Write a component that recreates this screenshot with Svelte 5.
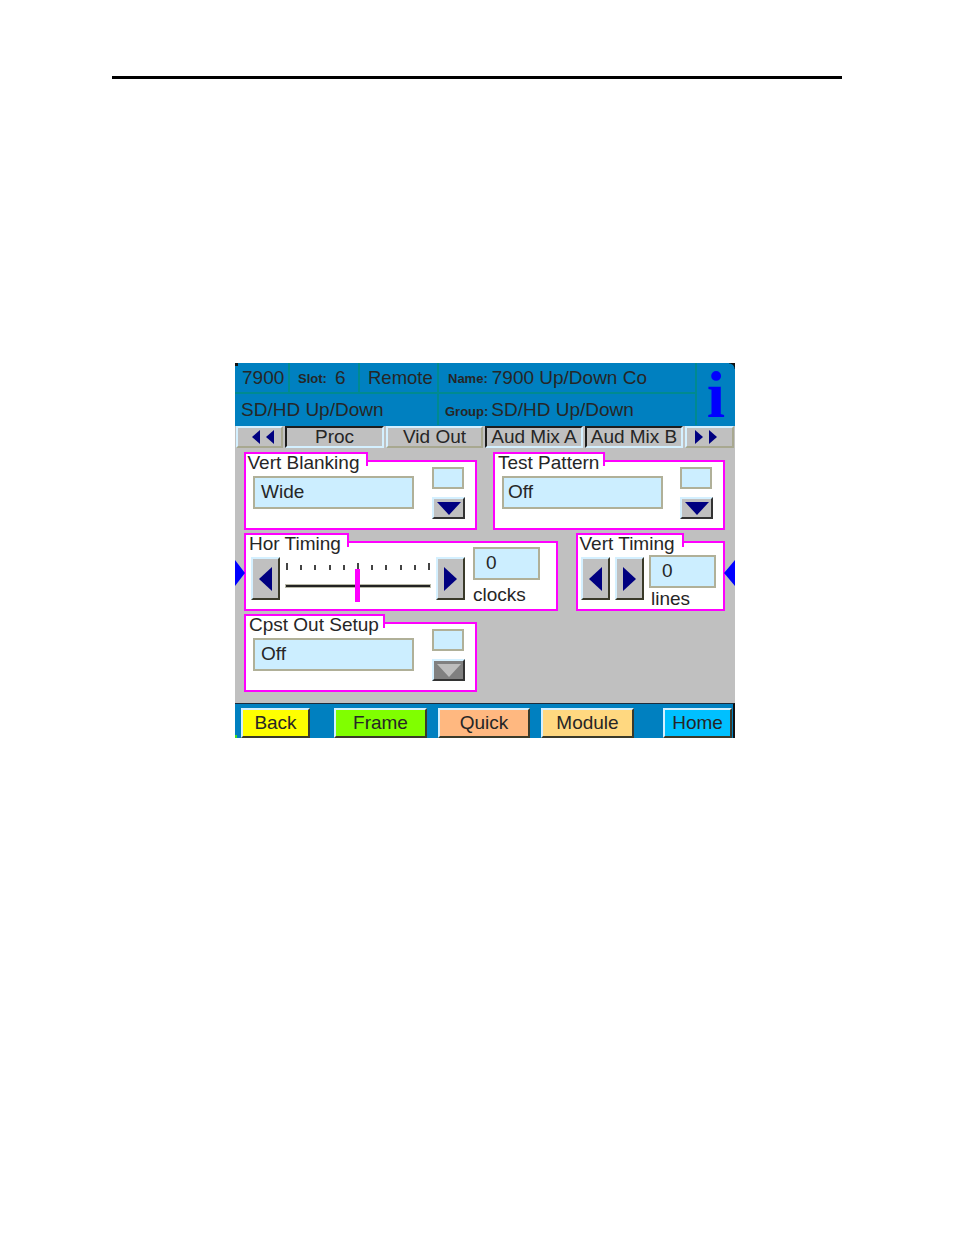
<script lang="ts">
  const tabs = [
    { label: 'Proc', sel: true, w: 99 },
    { label: 'Vid Out', sel: false, w: 97 },
    { label: 'Aud Mix A', sel: true, w: 98 },
    { label: 'Aud Mix B', sel: true, w: 98 },
  ];
  const navButtons = [
    { label: 'Back', color: '#ffff00', w: 69, gap: 24 },
    { label: 'Frame', color: '#80ff00', w: 93, gap: 11 },
    { label: 'Quick', color: '#ffb880', w: 92, gap: 11 },
    { label: 'Module', color: '#ffd880', w: 93, gap: 29 },
    { label: 'Home', color: '#00c0ff', w: 69, gap: 0 },
  ];
  const ticks = Array.from({ length: 11 }, (_, i) => i);
</script>

{#snippet arrowLeft()}
  <svg width="13" height="24" viewBox="0 0 13 24"><polygon points="13,0 13,24 0,12" fill="#000080"/></svg>
{/snippet}
{#snippet arrowRight()}
  <svg width="13" height="24" viewBox="0 0 13 24"><polygon points="0,0 0,24 13,12" fill="#000080"/></svg>
{/snippet}
{#snippet dropdown(off = false)}
  <div class="drop" class:drop--off={off}>
    <svg width="24" height="13" viewBox="0 0 24 13"><polygon points="0,0 24,0 12,13" fill={off ? '#bdbdbd' : '#000080'}/></svg>
  </div>
{/snippet}
{#snippet doubleArrow(right = false)}
  <svg width="24" height="14" viewBox="0 0 24 14" fill="#000080">
    {#if right}
      <polygon points="1,0 1,14 9,7"/><polygon points="15,0 15,14 23,7"/>
    {:else}
      <polygon points="9,0 9,14 1,7"/><polygon points="23,0 23,14 15,7"/>
    {/if}
  </svg>
{/snippet}

<div class="page">
  <div class="rule"></div>

  <div class="screen">
    <div class="head">
      <div class="cell">7900</div>
      <div class="cell cell--slot"><span class="tiny slot">Slot:</span><span>6</span></div>
      <div class="cell cell--remote">Remote</div>
      <div class="cell cell--name"><span class="tiny name">Name:</span><span>7900 Up/Down Co</span></div>
      <div class="cell cell--info">i</div>
      <div class="cell cell--wide">SD/HD Up/Down</div>
      <div class="cell cell--group"><span class="tiny group">Group:</span><span>SD/HD Up/Down</span></div>
    </div>

    <div class="tabs">
      <div class="tab tab--arrow">{@render doubleArrow()}</div>
      {#each tabs as t}
        <div class="tab" class:tab--sel={t.sel} style="width:{t.w}px">{t.label}</div>
      {/each}
      <div class="tab tab--end">{@render doubleArrow(true)}</div>
    </div>

    <div class="body">
      <div class="row row--top">
        <section class="panel panel--select">
          <div class="legend legend--v">Vert Blanking</div>
          <div class="field field--long">Wide</div>
          <div class="side">
            <div class="mini"></div>
            {@render dropdown()}
          </div>
        </section>
        <section class="panel panel--select panel--narrow">
          <div class="legend legend--short">Test Pattern</div>
          <div class="field field--long">Off</div>
          <div class="side">
            <div class="mini"></div>
            {@render dropdown()}
          </div>
        </section>
      </div>

      <div class="row row--mid">
        <section class="panel panel--hor">
          <div class="legend">Hor Timing</div>
          <div class="step">{@render arrowLeft()}</div>
          <div class="slider">
            <div class="ticks">
              {#each ticks as i}
                <span class="tick" class:tick--tall={i === 0 || i === 5 || i === 10}></span>
              {/each}
            </div>
            <div class="track"></div>
            <div class="thumb"></div>
          </div>
          <div class="step">{@render arrowRight()}</div>
          <div class="readout">
            <div class="field field--num">0</div>
            <div class="unit">clocks</div>
          </div>
        </section>
        <section class="panel panel--vert">
          <div class="legend legend--v">Vert Timing</div>
          <div class="step">{@render arrowLeft()}</div>
          <div class="step">{@render arrowRight()}</div>
          <div class="readout readout--low">
            <div class="field field--num">0</div>
            <div class="unit">lines</div>
          </div>
        </section>
      </div>

      <div class="row">
        <section class="panel panel--select">
          <div class="legend legend--short">Cpst Out Setup</div>
          <div class="field field--long">Off</div>
          <div class="side">
            <div class="mini"></div>
            {@render dropdown(true)}
          </div>
        </section>
      </div>

      <div class="edge edge--l"></div>
      <div class="edge edge--r"></div>
    </div>

    <div class="nav">
      {#each navButtons as b}
        <div class="navbtn" style="width:{b.w}px;margin-right:{b.gap}px;background:{b.color}">{b.label}</div>
      {/each}
    </div>
  </div>
</div>

<style>
  :global(body) {
    margin: 0;
    background: #fff;
    font-family: "Liberation Sans", Arial, sans-serif;
  }

  .page {
    width: 954px; height: 1235px;
    padding-top: 76px;
    box-sizing: border-box;
    overflow: hidden;
    color: #262626;
    font-size: 19px;
  }
  .rule { height: 3px; margin: 0 112px; background: #000; }

  .screen {
    position: relative;
    display: flex; flex-direction: column;
    width: 500px; height: 375px;
    margin: 284px 0 0 235px;
    background: #0080c0;
  }
  /* stray corner pixels of the panel */
  .screen::before {
    content: ""; position: absolute; left: 0; top: 0;
    width: 3px; height: 3px;
    background: #111;
  }
  .screen::after {
    content: ""; position: absolute; right: 0; top: 0;
    width: 6px; height: 6px;
    background: radial-gradient(circle at 0 100%, transparent 5px, #111 6px);
  }

  /* Header */
  .head {
    display: grid;
    grid-template-columns: 55px 70px 79px 258px 38px;
    grid-template-rows: 31px 31px;
    flex-shrink: 0;
  }
  .cell {
    display: flex; align-items: center;
    padding: 0 0 0 7px;
    box-sizing: border-box;
    border-right: 2px solid #008a90;
    border-bottom: 2px solid #008a90;
    white-space: nowrap;
  }
  .cell--slot   { padding-left: 8px; }
  .cell--remote { padding-left: 8px; font-size: 18.5px; }
  .cell--name   { padding-left: 9px; }
  .cell--info {
    grid-column: 5; grid-row: 1 / span 2;
    justify-content: center;
    padding: 2px 0 0;
    border: none;
    color: #0000ff;
    font-family: "Liberation Serif", serif;
    font-size: 66px; font-weight: 700; line-height: 1;
  }
  .cell--wide {
    grid-column: 1 / span 3;
    padding-left: 6px;
    border-bottom: none;
  }
  .cell--group { padding-left: 6px; border-bottom: none; }
  .tiny { font-size: 13px; font-weight: 700; }
  .slot  { margin: 2px 8px 0 0; }
  .name  { margin: 2px 4px 0 0; }
  .group { margin: 4px 3px 0 0; }

  /* Tabs */
  .tabs {
    display: flex; gap: 2px;
    height: 23px; padding-left: 1px;
    background: #c0c0c0 linear-gradient(#0080c0 0 1px, transparent 1px);
    flex-shrink: 0;
  }
  .tab {
    display: flex; align-items: center; justify-content: center;
    box-sizing: border-box;
    height: 22px; margin-top: 1px;
    border: 2px solid;
    border-color: #d4f0ff #a8a890 #a8a890 #d4f0ff;
    background: #c0c0c0;
    white-space: nowrap;
  }
  .tab--sel { border-color: #1c1c1c #d4f0ff #d4f0ff #1c1c1c; }
  .tab--arrow { width: 47px; padding-left: 6px; }
  .tab--end { width: 49px; padding-right: 8px; }

  /* Main area */
  .body {
    position: relative;
    display: flex; flex-direction: column; gap: 11px;
    height: 255px;
    box-sizing: border-box;
    padding: 12px 0 0 9px;
    background: #c0c0c0;
    flex-shrink: 0;
  }
  .row { display: flex; }
  .row--top { gap: 16px; }
  .row--mid { gap: 18px; }

  .panel {
    position: relative;
    display: flex; align-items: flex-start;
    box-sizing: border-box;
    height: 70px;
    border: 2px solid #ff00ff;
    background: #fff;
  }
  .panel--select { width: 233px; padding-left: 7px; }
  .panel--narrow { width: 232px; }
  .panel--narrow .field { padding-left: 4px; }
  .panel--narrow .side { margin-left: 17px; }
  .panel--hor  { width: 314px; padding: 14px 0 0 5px; }
  .panel--vert { width: 149px; padding: 14px 0 0 3px; gap: 5px; }

  .legend {
    position: absolute; left: -2px; top: -10px;
    height: 12px;
    padding: 0 6px 0 3px;
    border: 2px solid #ff00ff; border-bottom: none;
    background: #fff;
    line-height: 18px;
    white-space: nowrap;
  }
  .legend--v { padding: 0 7px 0 1.5px; }
  .legend--short { padding-right: 4px; }

  .field {
    box-sizing: border-box;
    border: 2px solid #b0b098;
    background: #cceeff;
    line-height: 28px;
  }
  .field--long { width: 161px; height: 33px; margin-top: 14px; padding-left: 6px; }
  .field--num  { width: 67px; height: 33px; padding-left: 11px; }

  .side {
    display: flex; flex-direction: column; gap: 8px;
    margin: 5px 0 0 18px;
  }
  .mini {
    box-sizing: border-box;
    width: 32px; height: 22px;
    border: 2px solid #b0b098;
    background: #cceeff;
  }
  .drop {
    display: flex; align-items: center; justify-content: center;
    box-sizing: border-box;
    width: 33px; height: 22px;
    border: 2px solid;
    border-color: #d4f0ff #333 #333 #d4f0ff;
    background: #c0c0c0;
  }
  .drop--off { background: #808080; }

  .step {
    display: flex; align-items: center; justify-content: center;
    box-sizing: border-box;
    flex-shrink: 0;
    width: 29px; height: 43px;
    border: 2px solid;
    border-color: #d4f0ff #3a3a2a #3a3a2a #d4f0ff;
    background: #c0c0c0;
  }

  .slider {
    position: relative;
    width: 144px; height: 43px;
    margin: 0 6px 0 6px;
  }
  .ticks { display: flex; justify-content: space-between; align-items: flex-end; height: 13px; }
  .tick { width: 2px; height: 5px; background: #444; }
  .tick--tall { height: 7px; }
  .track {
    height: 2px; margin-top: 15px;
    background: #222;
    box-shadow: 0 0 0 1px #b8b8a8;
  }
  .thumb {
    position: absolute; left: 69px; top: 12px;
    width: 5px; height: 33px;
    background: #ff00ff;
  }

  .readout { margin: -10px 0 0 8px; }
  .readout--low { margin: -2px 0 0; }
  .unit { line-height: 21px; margin-top: 4px; }
  .readout--low .unit { margin: 0 0 0 2px; }

  .edge {
    position: absolute; top: 112px;
    width: 0; height: 0;
    border-top: 13px solid transparent;
    border-bottom: 13px solid transparent;
  }
  .edge--l { left: 0; border-left: 10px solid #0000ff; }
  .edge--r { right: 0; border-right: 11px solid #0000ff; }

  /* Bottom bar */
  .nav {
    position: relative;
    display: flex; align-items: flex-start;
    flex: 1;
    padding: 4px 0 0 6px;
    border-top: 1px solid #1c2c3c;
    border-right: 2px solid #111;
  }
  .nav::after {
    content: ""; position: absolute; left: 0; bottom: 0;
    width: 2px; height: 3px;
    background: #40e020;
  }
  .navbtn {
    display: flex; align-items: center; justify-content: center;
    box-sizing: border-box;
    height: 30px;
    border: 2px solid;
    border-color: #d4f0ff #3a3a2a #3a3a2a #d4f0ff;
    flex-shrink: 0;
  }
</style>
